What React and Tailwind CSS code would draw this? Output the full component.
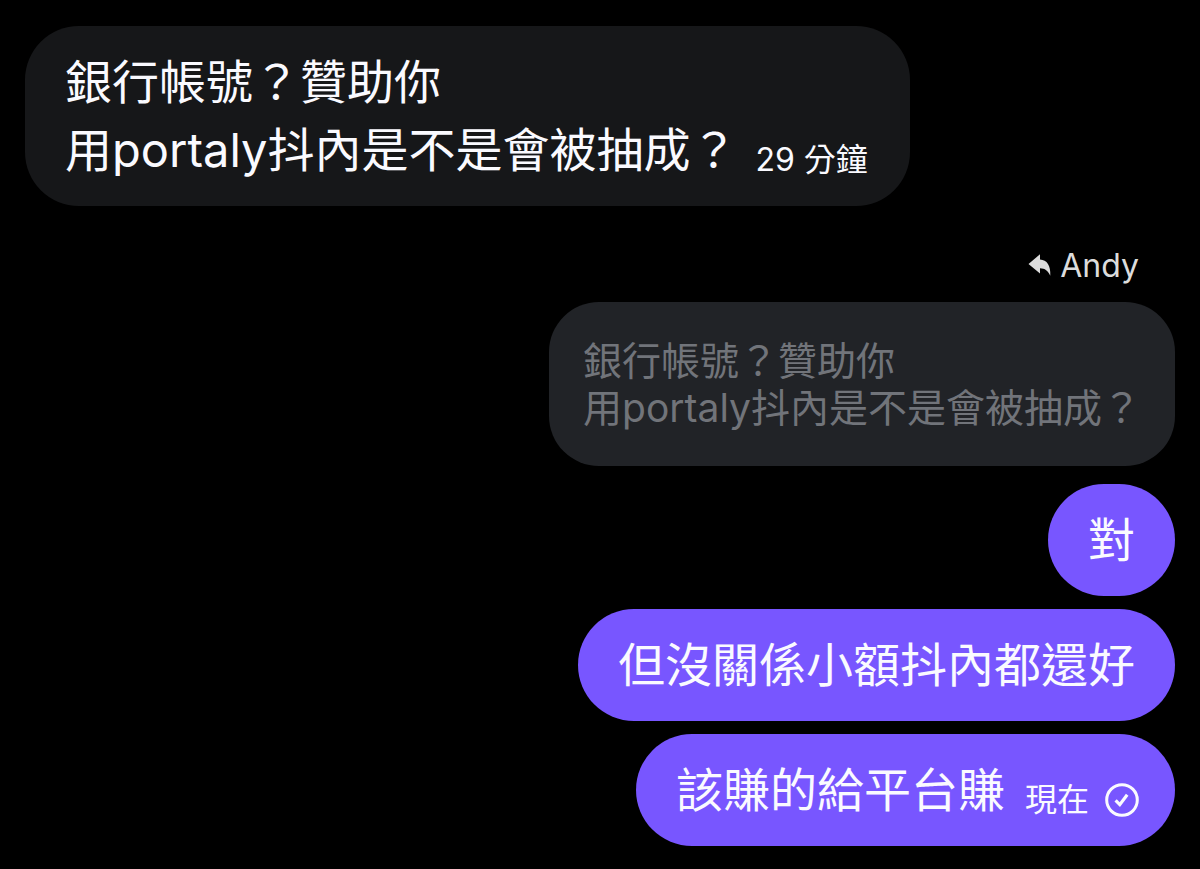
import React from "react";

function ReplyArrow() {
  return (
    <svg viewBox="0 0 24 24" className="h-6 w-6 shrink-0" fill="currentColor" aria-hidden="true">
      <path d="M0.5 10 L12 0.2 V5.6 C19 6 22.8 11.5 22.3 21.8 C20 16.6 17 14.4 12 14.2 V19.6 Z" />
    </svg>
  );
}

function SentCheck() {
  return (
    <svg viewBox="0 0 34 34" className="size-[34px] shrink-0" fill="none" stroke="currentColor" role="img" aria-label="已傳送">
      <circle cx="17" cy="17" r="15.3" strokeWidth="3" />
      <path d="M10.6 17.4 L14.8 21.6 L22.2 11.8" strokeWidth="3.2" />
    </svg>
  );
}

function Bubble({ tone, children, meta }) {
  const tones = {
    incoming: "self-start gap-[18px] rounded-[54px] bg-[#161719] pr-[42px]",
    outgoing: "self-end gap-5 rounded-[56px] bg-[#7856ff]",
  };
  const endPadding = tone === "outgoing" ? (meta ? "pr-9" : "pr-10") : "";
  return (
    <div className={`flex items-end py-[22px] pl-10 text-[47px] leading-[68px] text-[#fafaff] ${tones[tone]} ${endPadding}`}>
      <p>{children}</p>
      {meta && <div className="flex items-center gap-4 pb-0.5 text-[32px] leading-[44px]">{meta}</div>}
    </div>
  );
}

export default function App() {
  return (
    <main
      lang="zh-TW"
      className="flex min-h-screen flex-col bg-black px-[25px] pt-[26px] pb-5 font-['Inter','Noto_Sans_CJK_TC',sans-serif]"
    >
      <Bubble tone="incoming" meta={<time>29 分鐘</time>}>
        銀行帳號？贊助你
        <br />
        用portaly抖內是不是會被抽成？
      </Bubble>

      <div className="mt-10 flex items-center gap-2 self-end pr-9 text-[32px] leading-[40px] text-[#dcdcdc]">
        <ReplyArrow />
        <span>Andy</span>
      </div>

      <blockquote className="mt-4 self-end rounded-[50px] bg-[#212327] px-[34px] py-[35px] text-[39px] leading-[47px] text-[#71747a]">
        銀行帳號？贊助你
        <br />
        用portaly抖內是不是會被抽成？
      </blockquote>

      <div className="mt-[18px] flex flex-col gap-[13px]">
        <Bubble tone="outgoing">對</Bubble>
        <Bubble tone="outgoing">但沒關係小額抖內都還好</Bubble>
        <Bubble
          tone="outgoing"
          meta={
            <>
              <time>現在</time>
              <SentCheck />
            </>
          }
        >
          該賺的給平台賺
        </Bubble>
      </div>
    </main>
  );
}
